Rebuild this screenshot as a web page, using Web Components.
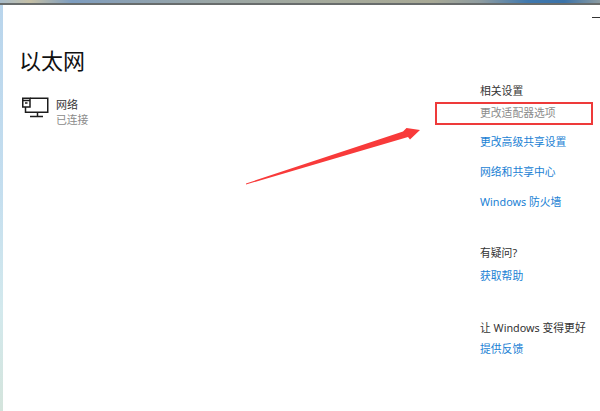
<!DOCTYPE html>
<html>
<head>
<meta charset="utf-8">
<style>
html,body{margin:0;padding:0;background:#fff}
body{width:600px;height:411px;overflow:hidden;font-family:"Noto Sans","Noto Sans CJK SC",sans-serif}
</style>
</head>
<body>
<settings-window>
  <network-page slot="main" title-text="以太网">
    <network-item name="网络" status="已连接"></network-item>
  </network-page>
  <side-group slot="side" heading="相关设置">
    <side-link boxed>更改适配器选项</side-link>
    <side-link>更改高级共享设置</side-link>
    <side-link>网络和共享中心</side-link>
    <side-link>Windows 防火墙</side-link>
  </side-group>
  <side-group slot="side" heading="有疑问?" style="margin-top:30px">
    <side-link style="margin-top:2px">获取帮助</side-link>
  </side-group>
  <side-group slot="side" heading="让 Windows 变得更好" style="margin-top:31px">
    <side-link>提供反馈</side-link>
  </side-group>
</settings-window>
<script>
const windowTpl = document.createElement('template');
windowTpl.innerHTML = `
  <style>
    :host{display:grid;grid-template-columns:3px 1fr;grid-template-rows:5px 1fr;width:600px;height:411px;position:relative}
    .top{grid-column:1 / 3;box-sizing:border-box;border-bottom:2px solid #686c6c;
      background:linear-gradient(90deg,#a8bccb 0%,#c5bfa5 5%,#7d9dc0 12%,#8aa0b4 20%,#9aa6a6 35%,#a5aa9c 55%,#a8a996 72%,#8f9ca0 80%,#3f78ae 88%,#3a72a8 94%,#8b9aa0 100%)}
    .edge{background:linear-gradient(180deg,#b9d5ec 0%,#c4deef 45%,#d3e9ed 75%,#d4e4dc 100%)}
    .body{display:flex;justify-content:space-between;min-width:0}
    .main{padding:38px 0 0 16px}
    .side{width:120px;padding:80px 0 0 0;display:flex;flex-direction:column}
    .min{position:absolute;top:17px;right:0;width:8px;height:1px;background:#333}
    svg{position:absolute;left:246px;top:127px;pointer-events:none}
  </style>
  <div class="top"></div>
  <div class="edge"></div>
  <div class="body">
    <div class="main"><slot name="main"></slot></div>
    <div class="side"><slot name="side"></slot></div>
  </div>
  <div class="min"></div>
  <svg width="175" height="60" viewBox="0 0 175 60"><path d="M0 56.5 L157 4.5 L160.5 1 L174 3 L164 12.5 L162 10 L0 57.5 Z" fill="#f83a3a"/></svg>
`;
class SettingsWindow extends HTMLElement{
  constructor(){
    super();
    this.attachShadow({mode:'open'});
    this.shadowRoot.appendChild(windowTpl.content.cloneNode(true));
  }
}
customElements.define('settings-window', SettingsWindow);

const pageTpl = document.createElement('template');
pageTpl.innerHTML = `
  <style>
    :host{display:block}
    h1{margin:0 0 19px;font-weight:400;font-size:22px;line-height:34px;color:#111}
  </style>
  <h1></h1>
  <slot></slot>
`;
class NetworkPage extends HTMLElement{
  constructor(){
    super();
    this.attachShadow({mode:'open'});
    this.shadowRoot.appendChild(pageTpl.content.cloneNode(true));
    this.shadowRoot.querySelector('h1').textContent = this.getAttribute('title-text');
  }
}
customElements.define('network-page', NetworkPage);

const itemTpl = document.createElement('template');
itemTpl.innerHTML = `
  <style>
    :host{display:flex;gap:7px;align-items:flex-start;margin-left:3px}
    svg{display:block;margin-top:1px}
    .name{font-size:11px;line-height:14px;color:#333;margin-top:2px}
    .status{font-size:10.8px;line-height:16px;color:#8a8a8a}
  </style>
  <svg width="27" height="21" viewBox="0 0 27 21" fill="none" stroke="#1c1c1c" stroke-width="1.5">
    <path d="M8 1.25H25.75V15.25H3.5V10"/>
    <path d="M.75 1.25H8V10H.75Z"/>
    <path d="M.75 3.5H8M3 6H5.5"/>
    <path d="M15.5 15.25V19.5M8 19.5H21"/>
  </svg>
  <div>
    <div class="name"></div>
    <div class="status"></div>
  </div>
`;
class NetworkItem extends HTMLElement{
  constructor(){
    super();
    this.attachShadow({mode:'open'});
    this.shadowRoot.appendChild(itemTpl.content.cloneNode(true));
    this.shadowRoot.querySelector('.name').textContent = this.getAttribute('name');
    this.shadowRoot.querySelector('.status').textContent = this.getAttribute('status');
  }
}
customElements.define('network-item', NetworkItem);

const groupTpl = document.createElement('template');
groupTpl.innerHTML = `
  <style>
    :host{display:block}
    .head{font-size:10.8px;line-height:12px;color:#333;white-space:nowrap}
  </style>
  <div class="head"></div>
  <slot></slot>
`;
class SideGroup extends HTMLElement{
  constructor(){
    super();
    this.attachShadow({mode:'open'});
    this.shadowRoot.appendChild(groupTpl.content.cloneNode(true));
    this.shadowRoot.querySelector('.head').textContent = this.getAttribute('heading');
  }
}
customElements.define('side-group', SideGroup);

const linkTpl = document.createElement('template');
linkTpl.innerHTML = `
  <style>
    :host{display:block;font-size:10.8px;line-height:30px;height:30px;color:#1a7fd4;white-space:nowrap;position:relative}
    :host([boxed]){color:#8c8c8c;line-height:32px}
    .box{display:none;position:absolute;left:-45px;top:5px;width:154px;height:19px;border:2px solid #ee3a3a;box-sizing:content-box}
    :host([boxed]) .box{display:block}
  </style>
  <slot></slot><div class="box"></div>
`;
class SideLink extends HTMLElement{
  constructor(){
    super();
    this.attachShadow({mode:'open'});
    this.shadowRoot.appendChild(linkTpl.content.cloneNode(true));
  }
}
customElements.define('side-link', SideLink);
</script>
</body>
</html>
